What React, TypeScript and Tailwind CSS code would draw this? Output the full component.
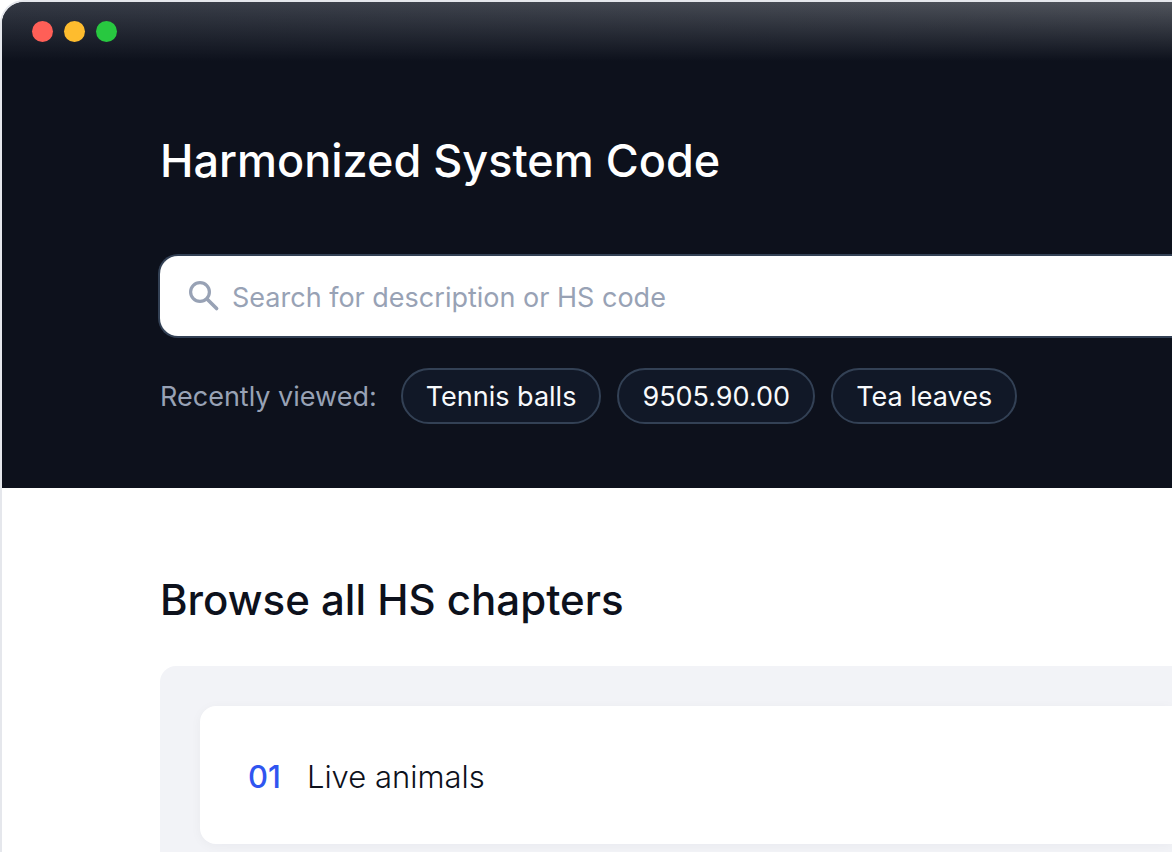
import { useState } from 'react';

const RECENT = ['Tennis balls', '9505.90.00', 'Tea leaves'];

const CHAPTERS = [{ code: '01', name: 'Live animals' }];

function SearchIcon() {
  return (
    <svg width="32" height="32" viewBox="0 0 32 32" fill="none" stroke="#98a2b5" className="shrink-0" aria-hidden="true">
      <circle cx="12" cy="12" r="9.4" strokeWidth="3.2" />
      <path d="M19 19 L28.6 28.6" strokeWidth="3.6" strokeLinecap="round" />
    </svg>
  );
}

function TitleBar() {
  return (
    <div className="flex h-[59px] items-center gap-[11px] bg-[linear-gradient(to_bottom,transparent,#0d111c),linear-gradient(to_right,#343944,#50545c)] pl-[30px]">
      <span className="size-[21px] rounded-full bg-[#ff5f57]" />
      <span className="size-[21px] rounded-full bg-[#febc2e]" />
      <span className="size-[21px] rounded-full bg-[#28c840]" />
    </div>
  );
}

export default function App() {
  const [query, setQuery] = useState('');

  return (
    <div className="flex min-h-screen flex-col overflow-hidden rounded-tl-3xl border-t-2 border-l-2 border-[#e5e7ec] bg-white font-['Inter',sans-serif] text-[#0d111c]">
      <header className="bg-[#0d111c] pb-16">
        <TitleBar />
        <div className="pt-[70px] pl-[158px]">
          <h1 className="text-[45px] leading-[60px] font-medium text-white">Harmonized System Code</h1>

          <div className="-ml-[2px] mt-[63px] flex h-[84px] items-center gap-3 rounded-l-[20px] border-2 border-r-0 border-[#334155] bg-white pl-7">
            <SearchIcon />
            <input
              type="text"
              aria-label="Search for description or HS code"
              value={query}
              onChange={(e) => setQuery(e.target.value)}
              placeholder="Search for description or HS code"
              className="h-12 min-w-0 flex-1 bg-transparent pt-[2px] text-[27px] outline-none placeholder:text-[#98a2b5]"
            />
          </div>

          <div className="mt-[30px] flex items-center gap-4">
            <span className="mr-2 pt-[2px] text-[27px] leading-10 text-[#98a2b5]">Recently viewed:</span>
            {RECENT.map((item) => (
              <button
                key={item}
                onClick={() => setQuery(item)}
                className="h-14 rounded-full border-2 border-[#334155] bg-[#111827] px-[23px] pt-[2px] text-[27px] leading-10 whitespace-nowrap text-[#f8fafc]"
              >
                {item}
              </button>
            ))}
          </div>
        </div>
      </header>

      <main className="flex flex-1 flex-col pt-[84px] pl-[158px]">
        <h2 className="text-[42px] leading-[56px] font-medium">Browse all HS chapters</h2>

        <ul className="mt-[38px] flex-1 rounded-tl-2xl bg-[#f2f3f7] pt-10 pl-10">
          {CHAPTERS.map((c) => (
            <li key={c.code} className="mb-2 rounded-l-2xl bg-white shadow-[0_2px_12px_rgba(16,24,40,0.04)]">
              <a href={`#chapter-${c.code}`} className="flex h-[138px] items-center gap-[26px] pt-1 pl-12 text-[31px] leading-10">
                <span className="font-medium text-[#2f55f0]">{c.code}</span>
                <span className="font-light">{c.name}</span>
              </a>
            </li>
          ))}
        </ul>
      </main>
    </div>
  );
}
